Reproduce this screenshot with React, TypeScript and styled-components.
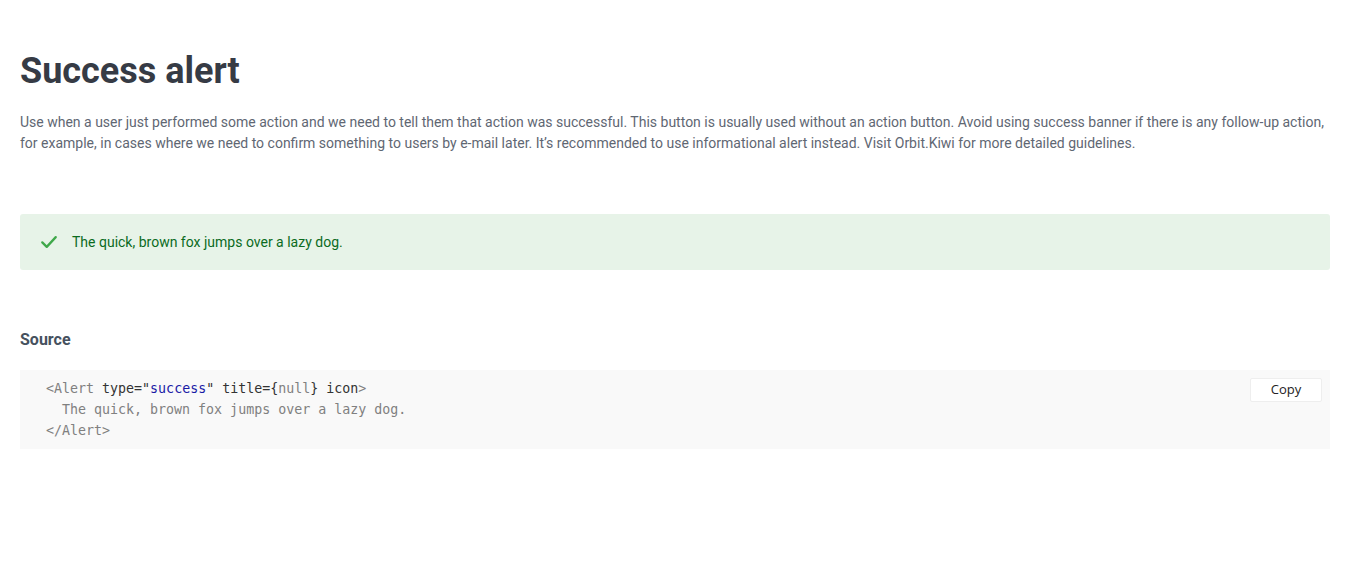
import styled, { createGlobalStyle } from 'styled-components'

const Global = createGlobalStyle`
    body {
        margin: 0;
        background: #fff;
        font-family: Roboto, "Liberation Sans", sans-serif;
    }
`

const Page = styled.div`
    padding: 49px 20px 40px;
    display: flex;
    flex-direction: column;
`

const Title = styled.h1`
    margin: 0;
    font-size: 36px;
    line-height: 44px;
    font-weight: 700;
    color: #363b45;
`

const Lead = styled.p`
    margin: 19px 0 0;
    font-size: 14px;
    line-height: 21px;
    color: #5f6773;
`

const Alert = styled.div`
    margin-top: 60px;
    display: flex;
    align-items: center;
    gap: 14px;
    height: 56px;
    padding: 0 20px;
    box-sizing: border-box;
    background: #e7f3e8;
    border-radius: 3px;
    color: #0b6b1e;
    font-size: 14px;
`

const Subtitle = styled.h3`
    margin: 60px 0 0;
    font-size: 16px;
    line-height: 20px;
    font-weight: 700;
    color: #46515e;
`

const CodeBox = styled.div`
    position: relative;
    margin-top: 20px;
    background: #f9f9f9;
    padding: 8px 26px 8px;
`

const Code = styled.pre`
    margin: 0;
    font-family: "DejaVu Sans Mono", "Liberation Mono", monospace;
    font-size: 13.3px;
    line-height: 21px;
    color: #333;
`

const Tok = styled.span<{ kind: 'tag' | 'str' | 'plain' }>`
    color: ${(p) => (p.kind === 'tag' ? '#808080' : p.kind === 'str' ? '#1a1aa6' : '#333')};
`

const CopyButton = styled.button`
    position: absolute;
    top: 8px;
    right: 8px;
    width: 72px;
    height: 24px;
    background: #fff;
    border: 1px solid #eeeeee;
    border-radius: 2px;
    font-family: "Open Sans", "Liberation Sans", sans-serif;
    font-size: 13px;
    line-height: 18px;
    padding: 0 0 2px;
    color: #222;
    cursor: pointer;
`

function Check() {
    return (
        <svg width="18" height="18" viewBox="0 0 24 24" fill="none">
            <path d="M3 12.5l6 6L21 5.5" stroke="#3fa84a" strokeWidth="3" strokeLinecap="round" strokeLinejoin="round" />
        </svg>
    )
}

export default function App() {
    return (
        <>
            <Global />
            <Page>
                <Title>Success alert</Title>
                <Lead>
                    Use when a user just performed some action and we need to tell them that action was successful. This button is usually used without an action button. Avoid using success banner if there is any follow-up action, for example, in cases where we need to confirm something to users by e-mail later. It’s recommended to use informational alert instead. Visit Orbit.Kiwi for more detailed guidelines.
                </Lead>
                <Alert>
                    <Check />
                    <span>The quick, brown fox jumps over a lazy dog.</span>
                </Alert>
                <Subtitle>Source</Subtitle>
                <CodeBox>
                    <Code>
                        <Tok kind="tag">&lt;Alert</Tok> type=<Tok kind="plain">"</Tok><Tok kind="str">success</Tok>" title={'{'}<Tok kind="tag">null</Tok>{'}'} icon<Tok kind="tag">&gt;</Tok>{'\n'}
                        <Tok kind="tag">{'  The quick, brown fox jumps over a lazy dog.'}</Tok>{'\n'}
                        <Tok kind="tag">&lt;/Alert&gt;</Tok>
                    </Code>
                    <CopyButton>Copy</CopyButton>
                </CodeBox>
            </Page>
        </>
    )
}
